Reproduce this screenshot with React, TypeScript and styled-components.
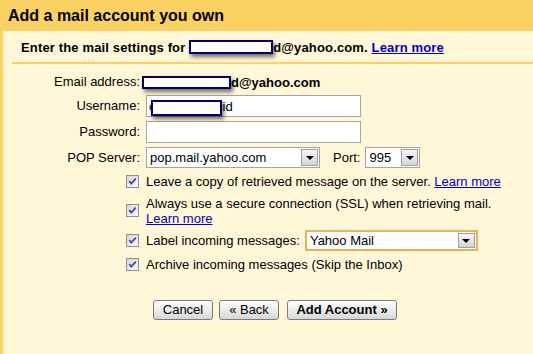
import React from "react";
import styled, { createGlobalStyle } from "styled-components";

const Global = createGlobalStyle`
  html, body { margin: 0; padding: 0; background: #fad163; }
  body { font-family: "Liberation Sans", Arial, sans-serif; font-size: 13px; color: #000; }
  #root { min-height: 100vh; display: flex; flex-direction: column; }
`;

const Page = styled.div`
  flex: 1;
  min-height: 354px;
  display: flex;
  flex-direction: column;
  background: #fad163;
`;

const Header = styled.div`
  height: 31px;
  padding-left: 8px;
  font-size: 16px;
  font-weight: bold;
  line-height: 31px;
`;

const Body = styled.div`
  flex: 1;
  margin-left: 3px;
  background: #fff7d7;
`;

const SubHeader = styled.div`
  margin-left: 9px;
  padding: 9px 0 7px 9px;
  line-height: 15px;
  font-weight: bold;
  border-bottom: 2px solid #fad163;
  white-space: nowrap;
  letter-spacing: 0.15px;
`;

const Link = styled.a<{ $bold?: boolean }>`
  color: #0000cc;
  text-decoration: underline;
  font-weight: ${(p) => (p.$bold ? "bold" : "normal")};
  cursor: pointer;
`;

const Redact = styled.span<{ $w: number; $h: number; $align?: string; $ml?: number; $mt?: number }>`
  display: inline-block;
  position: relative;
  box-sizing: border-box;
  width: ${(p) => p.$w}px;
  height: ${(p) => p.$h}px;
  margin-left: ${(p) => p.$ml ?? 0}px;
  margin-right: ${(p) => (p.$ml ? 1 : 0)}px;
  margin-top: ${(p) => p.$mt ?? 0}px;
  background: #fff;
  border: 2px solid #00006a;
  box-shadow: 2px 3px 4px rgba(0, 0, 0, 0.55);
  vertical-align: ${(p) => p.$align || "middle"};
`;

const Form = styled.div`
  display: grid;
  grid-template-columns: 138px 1fr;
  column-gap: 1px;
  row-gap: 4px;
  padding-top: 9px;
`;

const Label = styled.div<{ $h: number }>`
  height: ${(p) => p.$h}px;
  line-height: ${(p) => p.$h}px;
  text-align: right;
  padding-right: 1px;
  white-space: nowrap;
`;

const Value = styled.div<{ $h: number }>`
  height: ${(p) => p.$h}px;
  display: flex;
  align-items: center;
  white-space: nowrap;
`;

const Bold = styled.span`
  font-weight: bold;
`;

const TextBox = styled.div`
  box-sizing: border-box;
  margin-left: 4px;
  width: 215px;
  height: 22px;
  background: #fff;
  border: 1px solid #a5a5a5;
  padding: 0 2px;
  display: flex;
  align-items: center;
  white-space: nowrap;
`;

const SelectBox = styled.div<{ $w: number; $hl?: boolean; $ml?: number }>`
  box-sizing: border-box;
  margin-left: ${(p) => p.$ml ?? 4}px;
  width: ${(p) => p.$w}px;
  height: 21px;
  background: #fff;
  border: ${(p) => (p.$hl ? "2px solid #e3b55a" : "1px solid #a5a5a5")};
  display: flex;
  align-items: stretch;
  white-space: nowrap;
`;

const SelectText = styled.span`
  flex: 1;
  padding-left: 3px;
  display: flex;
  align-items: center;
  overflow: hidden;
`;

const ArrowBtn = styled.span`
  box-sizing: border-box;
  width: 17px;
  margin: 1px;
  border: 1px solid #a0a0a0;
  background: linear-gradient(#f6f6f6, #d4d4d4);
  display: flex;
  align-items: center;
  justify-content: center;
  &::after {
    content: "";
    width: 0;
    height: 0;
    border-left: 4px solid transparent;
    border-right: 4px solid transparent;
    border-top: 4px solid #000;
    margin-top: 1px;
  }
`;

const PortLabel = styled.span`
  margin-left: 13px;
`;

const CheckCell = styled.div<{ $h: number }>`
  height: ${(p) => p.$h}px;
  display: flex;
  align-items: center;
  justify-content: flex-end;
  padding-right: 2px;
`;

const CheckText = styled.div<{ $h: number }>`
  min-height: ${(p) => p.$h}px;
  padding-left: 4px;
  line-height: 15px;
  display: flex;
  align-items: center;
  white-space: nowrap;
`;

const ButtonRow = styled.div`
  grid-column: 2;
  margin-top: 22px;
  padding-left: 11px;
  display: flex;
  align-items: center;
`;

const Button = styled.button<{ $bold?: boolean; $w: number; $ml?: number }>`
  box-sizing: border-box;
  width: ${(p) => p.$w}px;
  height: 20px;
  margin: 0 0 0 ${(p) => p.$ml ?? 0}px;
  padding: 0;
  font-family: "Liberation Sans", Arial, sans-serif;
  font-size: 13px;
  font-weight: ${(p) => (p.$bold ? "bold" : "normal")};
  color: #000;
  border: 1px solid #7b7b7b;
  border-radius: 3px;
  background: linear-gradient(#fdfdfd 0%, #ececec 50%, #d6d6d6 100%);
  box-shadow: inset 0 1px 0 #fff;
  line-height: 18px;
`;

const Check = () => (
  <svg width="13" height="13" viewBox="0 0 13 13">
    <defs>
      <linearGradient id="cbg" x1="0" y1="0" x2="1" y2="1">
        <stop offset="0" stopColor="#d6d6d6" />
        <stop offset="1" stopColor="#fbfbfb" />
      </linearGradient>
    </defs>
    <rect x="0.5" y="0.5" width="12" height="12" fill="url(#cbg)" stroke="#8e8f8f" />
    <path d="M3.2 6.2 L5.3 8.6 L9.8 3.6" fill="none" stroke="#3d4fa6" strokeWidth="1.8" />
  </svg>
);

const Select = ({ text, w, hl, ml }: { text: string; w: number; hl?: boolean; ml?: number }) => (
  <SelectBox $w={w} $hl={hl} $ml={ml}>
    <SelectText>{text}</SelectText>
    <ArrowBtn />
  </SelectBox>
);

export default function App() {
  return (
    <>
      <Global />
      <Page>
        <Header>Add a mail account you own</Header>
        <Body>
          <SubHeader>
            Enter the mail settings for <Redact $w={84} $h={14} $align="top" />
            d@yahoo.com. <Link $bold>Learn more</Link>
          </SubHeader>
          <Form>
            <Label $h={18}>Email address:</Label>
            <Value $h={18}>
              <Redact $w={89} $h={13} />
              <Bold>d@yahoo.com</Bold>
            </Value>

            <Label $h={22}>Username:</Label>
            <Value $h={22}>
              <TextBox>
                <span>c</span>
                <Redact $w={71} $h={16} $ml={-5} $mt={4} />
                <span>id</span>
              </TextBox>
            </Value>

            <Label $h={22}>Password:</Label>
            <Value $h={22}>
              <TextBox />
            </Value>

            <Label $h={21}>POP Server:</Label>
            <Value $h={21}>
              <Select text="pop.mail.yahoo.com" w={174} />
              <PortLabel>Port:</PortLabel>
              <Select text="995" w={55} ml={5} />
            </Value>

            <CheckCell $h={19}><Check /></CheckCell>
            <CheckText $h={19}>
              <span>
                Leave a copy of retrieved message on the server. <Link>Learn more</Link>
              </span>
            </CheckText>

            <CheckCell $h={31}><Check /></CheckCell>
            <CheckText $h={31}>
              <span>
                Always use a secure connection (SSL) when retrieving mail.
                <br />
                <Link>Learn more</Link>
              </span>
            </CheckText>

            <CheckCell $h={21}><Check /></CheckCell>
            <CheckText $h={21}>
              <span>Label incoming messages:</span>
              <Select text="Yahoo Mail" w={173} hl ml={5} />
            </CheckText>

            <CheckCell $h={19}><Check /></CheckCell>
            <CheckText $h={19}>
              <span>Archive incoming messages (Skip the Inbox)</span>
            </CheckText>

            <ButtonRow>
              <Button $w={60}>Cancel</Button>
              <Button $w={60} $ml={6}>« Back</Button>
              <Button $w={110} $ml={8} $bold>Add Account »</Button>
            </ButtonRow>
          </Form>
        </Body>
      </Page>
    </>
  );
}
